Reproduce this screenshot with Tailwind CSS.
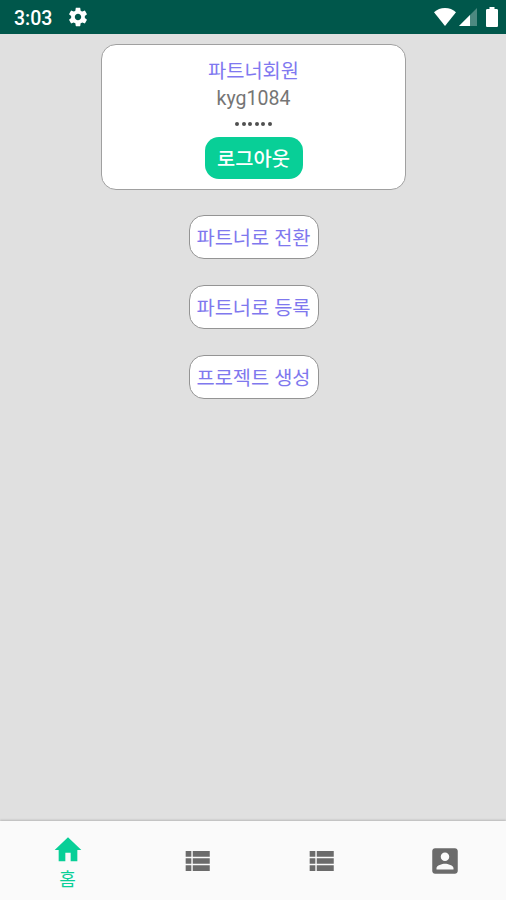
<!DOCTYPE html>
<html lang="ko">
  <head>
    <meta charset="UTF-8" />
    <meta
      name="viewport"
      content="width=device-width, initial-scale=1.0" />
    <title>홈</title>
    <script src="https://cdn.jsdelivr.net/npm/@tailwindcss/browser@4"></script>
  </head>
  <body class="bg-[#e0e0e0] font-['Roboto','Noto_Sans_CJK_KR',sans-serif]">
    <div class="flex h-screen flex-col overflow-hidden">
      <!-- Status bar -->
      <header
        class="flex h-[34px] shrink-0 items-center bg-[#00574b] pr-2 pl-3.5 text-white">
        <span class="w-[53px] pt-[3px] text-[19.500px] leading-none font-medium">3:03</span>
        <svg class="size-[22px]" viewBox="0 0 24 24" fill="currentColor">
          <path
            d="M19.43 12.98c.04-.32.07-.64.07-.98s-.03-.66-.07-.98l2.11-1.65c.19-.15.24-.42.12-.64l-2-3.46c-.12-.22-.39-.3-.61-.22l-2.49 1c-.52-.4-1.08-.73-1.69-.98l-.38-2.65C14.46 2.18 14.25 2 14 2h-4c-.25 0-.46.18-.49.42l-.38 2.65c-.61.25-1.17.59-1.69.98l-2.49-1c-.23-.09-.49 0-.61.22l-2 3.46c-.13.22-.07.49.12.64l2.11 1.65c-.04.32-.07.65-.07.98s.03.66.07.98l-2.11 1.65c-.19.15-.24.42-.12.64l2 3.46c.12.22.39.3.61.22l2.49-1c.52.4 1.08.73 1.69.98l.38 2.65c.03.24.24.42.49.42h4c.25 0 .46-.18.49-.42l.38-2.65c.61-.25 1.17-.59 1.69-.98l2.49 1c.23.09.49 0 .61-.22l2-3.46c.12-.22.07-.49-.12-.64l-2.11-1.65zM12 15.5c-1.93 0-3.5-1.57-3.5-3.5s1.57-3.5 3.5-3.5 3.5 1.57 3.5 3.5-1.57 3.5-3.5 3.5z" />
        </svg>
        <div class="ml-auto flex items-center">
          <svg class="h-[18px] w-[22px]" viewBox="0 0 22 18" fill="currentColor">
            <path d="M11 18 0 4.2C3 1.5 6.800 0 11 0s8 1.500 11 4.200z" />
          </svg>
          <svg class="ml-[3px] h-[18px] w-[18px]" viewBox="0 0 18 18" fill="currentColor">
            <path d="M0 18 18 0v18z" fill-opacity=".3" />
            <path d="M0 18 11 7v11z" />
          </svg>
          <svg class="ml-[9px] h-5 w-3" viewBox="0 0 12 20" fill="currentColor">
            <path
              d="M10.700 2H8.500V0h-5v2H1.300C.600 2 0 2.600 0 3.300v15.400c0 .7.600 1.300 1.300 1.300h9.400c.7 0 1.300-.6 1.300-1.300V3.300c0-.7-.6-1.300-1.300-1.300z" />
          </svg>
        </div>
      </header>

      <main class="flex grow flex-col items-center pt-2.5 pl-px">
        <!-- Account card -->
        <section
          class="flex h-[146px] w-[305px] flex-col items-center rounded-[15px] border border-[#a0a0a0] bg-white pt-[13px] text-[#757575]">
          <h1 class="text-[19.800px] leading-[27px] text-[#8078f0]">파트너회원</h1>
          <p class="text-[19.500px] leading-[27px]">kyg1084</p>
          <div class="flex h-[25px] items-center gap-[2.600px] pb-px">
            <i class="size-1 rounded-full bg-[#505050]"></i>
            <i class="size-1 rounded-full bg-[#505050]"></i>
            <i class="size-1 rounded-full bg-[#505050]"></i>
            <i class="size-1 rounded-full bg-[#505050]"></i>
            <i class="size-1 rounded-full bg-[#505050]"></i>
            <i class="size-1 rounded-full bg-[#505050]"></i>
          </div>
          <button
            class="h-[42px] w-[98px] rounded-[14px] bg-[#08cf97] pt-[3px] text-[19.800px] leading-none font-medium text-white">
            로그아웃
          </button>
        </section>

        <div class="mt-[25px] flex flex-col gap-[26px] text-[19.800px] leading-none text-[#7f78ee]">
          <button class="h-11 w-[130px] rounded-[15px] border border-[#949494] bg-white pt-[3px]">
            파트너로 전환
          </button>
          <button class="h-11 w-[130px] rounded-[15px] border border-[#949494] bg-white pt-[3px]">
            파트너로 등록
          </button>
          <button class="h-11 w-[130px] rounded-[15px] border border-[#949494] bg-white pt-[3px]">
            프로젝트 생성
          </button>
        </div>
      </main>

      <!-- Bottom navigation -->
      <nav
        class="grid h-[79px] shrink-0 grid-cols-[135px_repeat(3,124px)] items-center bg-[#fafafa] text-[#6b6b6b] shadow-[0_-1px_2px_rgba(0,0,0,0.18)]">
        <a class="flex flex-col items-center gap-px pt-[3px] text-[#08cf97]">
          <svg
            class="h-[34px] w-8"
            viewBox="0 0 24 24"
            preserveAspectRatio="none"
            fill="currentColor">
            <path d="M10 20v-6h4v6h5v-8h3L12 3 2 12h3v8z" />
          </svg>
          <span class="text-lg leading-6">홈</span>
        </a>
        <a class="flex justify-center">
          <svg class="size-[34px]" viewBox="0 0 24 24" fill="currentColor">
            <path
              d="M4 14h4v-4H4v4zm0 5h4v-4H4v4zM4 9h4V5H4v4zm5 5h12v-4H9v4zm0 5h12v-4H9v4zM9 5v4h12V5H9z" />
          </svg>
        </a>
        <a class="flex justify-center">
          <svg class="size-[34px]" viewBox="0 0 24 24" fill="currentColor">
            <path
              d="M4 14h4v-4H4v4zm0 5h4v-4H4v4zM4 9h4V5H4v4zm5 5h12v-4H9v4zm0 5h12v-4H9v4zM9 5v4h12V5H9z" />
          </svg>
        </a>
        <a class="flex justify-center">
          <svg class="size-[34px]" viewBox="0 0 24 24" fill="currentColor">
            <path
              d="M3 5v14c0 1.100.89 2 2 2h14c1.100 0 2-.9 2-2V5c0-1.100-.9-2-2-2H5c-1.110 0-2 .9-2 2zm12 4c0 1.660-1.340 3-3 3s-3-1.340-3-3 1.340-3 3-3 3 1.340 3 3zm-9 8c0-2 4-3.100 6-3.100s6 1.100 6 3.100v1H6v-1z" />
          </svg>
        </a>
      </nav>
    </div>
  </body>
</html>
